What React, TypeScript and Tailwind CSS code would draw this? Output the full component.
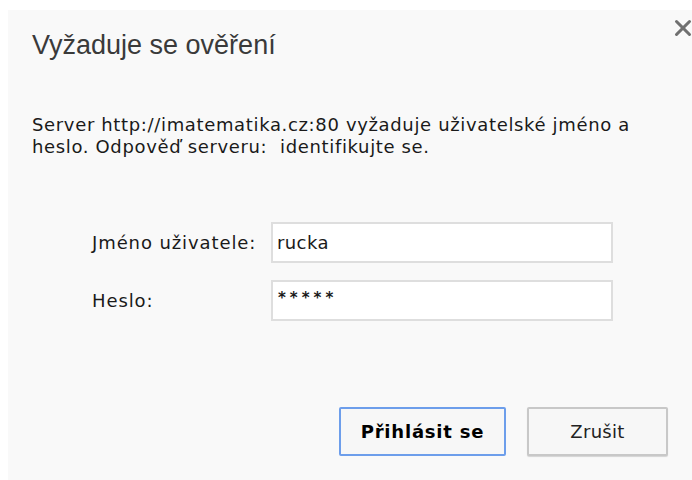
import { X } from 'lucide-react';

const sans = { fontFamily: '"DejaVu Sans", Tahoma, sans-serif' };
const title = { fontFamily: '"Liberation Sans", Arial, sans-serif' };

export default function App() {
  return (
    <div className="h-[480px] w-[692px] overflow-hidden bg-white pl-[8px] pt-[10px]" style={sans}>
      <div className="relative flex h-full flex-col bg-[#f9f9f9] pl-[24px] text-[#1a1a1a]">
        <button className="absolute right-[-4px] top-[5px] text-[#707070]">
          <X size={26} strokeWidth={2.8} />
        </button>

        <h1 className="mt-[21px] text-[27px] leading-[28px] text-[#3a3a3a]" style={title}>
          Vyžaduje se ověření
        </h1>

        <p className="mt-[55px] text-[18px] leading-[22px] tracking-[0.65px]">
          Server http://imatematika.cz:80 vyžaduje uživatelské jméno a
          <br />
          heslo. Odpověď serveru:&nbsp; identifikujte se.
        </p>

        <div className="ml-[60px] mt-[64px] flex flex-col gap-[17px]">
          <div className="flex items-center">
            <label className="w-[179px] text-[18px] tracking-[0.9px]">Jméno uživatele:</label>
            <div className="flex h-[41px] w-[342px] items-center border-2 border-[#dedede] bg-white px-[4px] text-[18px] tracking-[0.4px]">
              rucka
            </div>
          </div>
          <div className="flex items-center">
            <label className="w-[179px] text-[18px] tracking-[0.9px]">Heslo:</label>
            <div className="flex h-[41px] w-[342px] items-center border-2 border-[#dedede] bg-white px-[5px] pb-[4px] text-[15px] font-bold tracking-[4px]">
              *****
            </div>
          </div>
        </div>

        <div className="mt-[86px] flex justify-end gap-[21px] pr-[24px]">
          <button className="h-[49px] w-[167px] rounded-[2px] border-2 border-[#6d9eeb] bg-[#f7f7f7] text-[18px] font-bold tracking-[0.8px] text-black">
            Přihlásit se
          </button>
          <button className="h-[49px] w-[141px] rounded-[2px] border-2 border-[#c8c8c8] bg-[#f7f7f7] text-[18px] tracking-[0.3px] text-[#222] shadow-[0_1px_1px_rgba(0,0,0,0.15)]">
            Zrušit
          </button>
        </div>
      </div>
    </div>
  );
}
